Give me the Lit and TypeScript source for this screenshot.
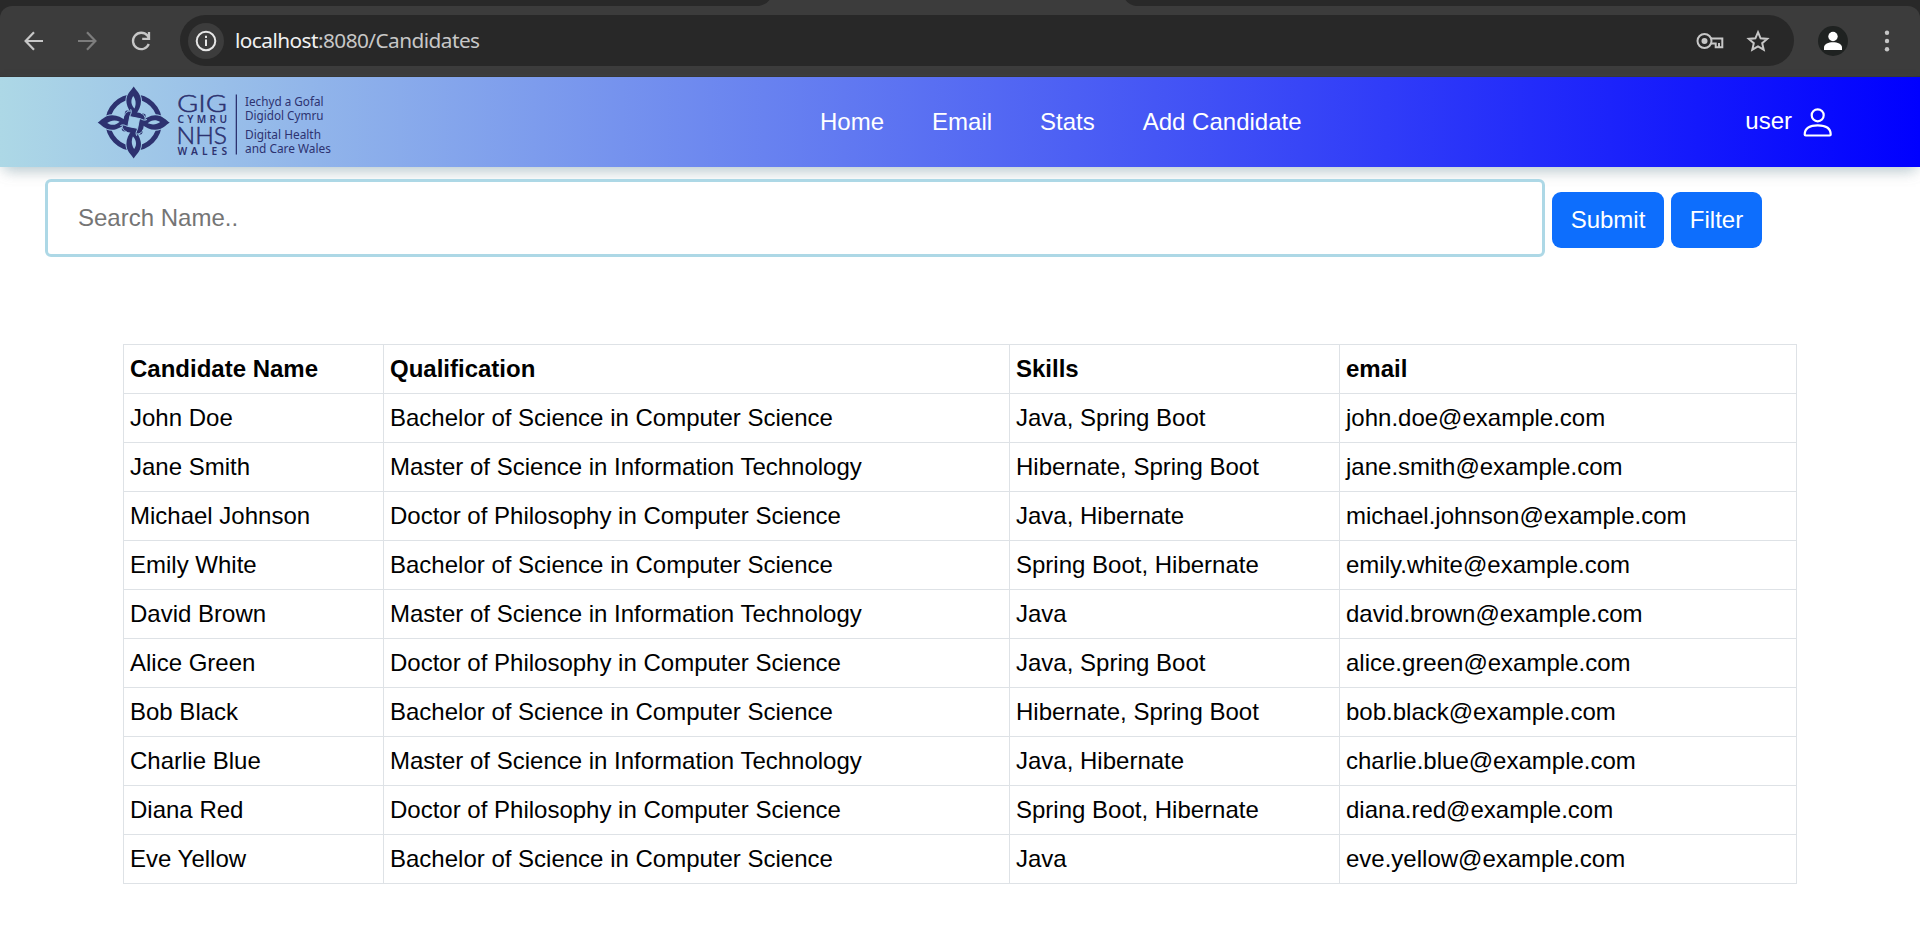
import { LitElement, html, css, svg } from "lit";
import { customElement, state } from "lit/decorators.js";

interface Candidate {
  name: string;
  qualification: string;
  skills: string;
  email: string;
}

const BSC = "Bachelor of Science in Computer Science";
const MSC = "Master of Science in Information Technology";
const PHD = "Doctor of Philosophy in Computer Science";

const CANDIDATES: Candidate[] = [
  { name: "John Doe", qualification: BSC, skills: "Java, Spring Boot", email: "john.doe@example.com" },
  { name: "Jane Smith", qualification: MSC, skills: "Hibernate, Spring Boot", email: "jane.smith@example.com" },
  { name: "Michael Johnson", qualification: PHD, skills: "Java, Hibernate", email: "michael.johnson@example.com" },
  { name: "Emily White", qualification: BSC, skills: "Spring Boot, Hibernate", email: "emily.white@example.com" },
  { name: "David Brown", qualification: MSC, skills: "Java", email: "david.brown@example.com" },
  { name: "Alice Green", qualification: PHD, skills: "Java, Spring Boot", email: "alice.green@example.com" },
  { name: "Bob Black", qualification: BSC, skills: "Hibernate, Spring Boot", email: "bob.black@example.com" },
  { name: "Charlie Blue", qualification: MSC, skills: "Java, Hibernate", email: "charlie.blue@example.com" },
  { name: "Diana Red", qualification: PHD, skills: "Spring Boot, Hibernate", email: "diana.red@example.com" },
  { name: "Eve Yellow", qualification: BSC, skills: "Java", email: "eve.yellow@example.com" },
];

@customElement("browser-bar")
export class BrowserBar extends LitElement {
  static styles = css`
    :host { display: block; height: 77px; background: #292929; font-family: "Noto Sans", sans-serif; overflow: hidden; }
    .tabs { height: 6px; display: flex; padding-left: 747px; }
    .toolbar {
      height: 71px; box-sizing: border-box; background: #3c3c3c; border-bottom: 1px solid #363636;
      border-radius: 12px 12px 0 0; display: flex; align-items: flex-start; padding: 9px 0 0 19.5px;
    }
    .btn { width: 28px; height: 52px; display: flex; align-items: center; justify-content: center; margin-right: 25.5px; flex: none; }
    .reload { margin-right: 25.5px; }
    .omnibox {
      width: 1614px; height: 51px; border-radius: 26px; background: #282828; box-sizing: border-box;
      display: flex; align-items: center; padding: 0 24px 0 8px; flex: none;
    }
    .info { width: 36px; height: 36px; border-radius: 50%; background: #3c3c3c; display: flex; align-items: center; justify-content: center; flex: none; }
    .url { margin: -2px 0 0 11px; font-size: 20.8px; letter-spacing: -0.55px; color: #c7c7c7; flex: 1; white-space: nowrap; line-height: 28px; }
    .host { color: #f1f1f1; }
    .key { margin-right: 20px; }
    .avatar { margin: 11px 0 0 24px; width: 30px; height: 30px; flex: none; }
    .menu { margin: 13px 0 0 36px; width: 6px; height: 26px; flex: none; }
    svg { display: block; }
  `;

  render() {
    return html`
      <div class="tabs">
        <svg width="402" height="6"><path d="M0 6H12Q19 5 22.500 0H378.500Q382 5 389 6H402Z" fill="#3c3c3c" /></svg>
      </div>
      <div class="toolbar">
        <div class="btn">
          <svg width="22" height="22" viewBox="0 0 22 22" fill="none" stroke="#c7c7c7" stroke-width="2.2"><path d="M20 11H3M11 2.200L2.600 11L11 19.800" /></svg>
        </div>
        <div class="btn">
          <svg width="22" height="22" viewBox="0 0 22 22" fill="none" stroke="#7d7d7d" stroke-width="2.2"><path d="M2 11H19M11 2.200L19.400 11L11 19.800" /></svg>
        </div>
        <div class="btn reload">
          <svg width="22" height="22" viewBox="0 0 22 22" fill="none" stroke="#c7c7c7" stroke-width="2.3"><path d="M18.800 14A8.200 8.200 0 1 1 17.400 5.600L19 8M19 2V8.800H12.200" /></svg>
        </div>
        <div class="omnibox">
          <div class="info">
            <svg width="22" height="22" viewBox="0 0 22 22"><circle cx="11" cy="11" r="9.300" fill="none" stroke="#e6e6e6" stroke-width="2" /><path d="M11 9.500V16M11 5.800V7.900" stroke="#e6e6e6" stroke-width="2" /></svg>
          </div>
          <div class="url"><span class="host">localhost</span>:8080/Candidates</div>
          <svg class="key" width="30" height="20" viewBox="0 0 30 20" fill="none" stroke="#c7c7c7" stroke-width="2">
            <circle cx="8.500" cy="10" r="7" /><circle cx="8.500" cy="10" r="3" fill="#c7c7c7" stroke="none" />
            <path d="M15 7.600H26.300V16.200H19.700V12.400H15M23 12V16" />
          </svg>
          <svg width="24" height="24" viewBox="0 0 24 24" fill="none" stroke="#c7c7c7" stroke-width="2"><path d="M12 3.200L14.600 9.300L21.200 9.900L16.200 14.200L17.700 20.700L12 17.300L6.300 20.700L7.800 14.200L2.800 9.900L9.400 9.300Z" /></svg>
        </div>
        <svg class="avatar" viewBox="0 0 30 30"><circle cx="15" cy="15" r="15" fill="#1f2221" /><circle cx="15" cy="10.500" r="4.700" fill="#fff" /><path d="M6 24V21.500C6 18 10.500 16.300 15 16.300S24 18 24 21.500V24Z" fill="#fff" /></svg>
        <svg class="menu" viewBox="0 0 6 26" fill="#c7c7c7"><circle cx="3" cy="4.700" r="2.200" /><circle cx="3" cy="13" r="2.200" /><circle cx="3" cy="21.300" r="2.200" /></svg>
      </div>
    `;
  }
}

@customElement("wales-logo")
export class WalesLogo extends LitElement {
  static styles = css`
    :host { display: block; width: 240px; height: 74px; }
    svg { display: block; overflow: visible; }
    .gig { font: 300 24px Lato, sans-serif; stroke: #2d3270; stroke-width: 0.5px; }
    .sub { font: 600 10.200px "Noto Sans", sans-serif; }
    .org { font: 400 13px "Noto Sans", sans-serif; }
  `;

  private turns(draw: () => unknown) {
    return [0, 90, 180, 270].map((a) => svg`<g transform=${`rotate(${a})`}>${draw()}</g>`);
  }

  render() {
    const leaf = "M0 -36C2 -32.500 7.300 -29 7.300 -21.500C7.300 -16 5 -12 2 -8L-3 -8C-3.500 -12 -7.300 -16 -7.300 -21.500C-7.300 -29 -2 -32.500 0 -36Z";
    const eye = "M-0.500 -26.500C2 -23 2.800 -19 0.800 -14C-2.600 -17.500 -3.500 -22 -0.500 -26.500Z";
    return html`
      <svg width="240" height="74" viewBox="0 0 240 74" fill="#2d3270">
        <g transform="translate(35.700 36.500)">
          <circle r="25.800" fill="none" stroke="#2d3270" stroke-width="4.900" />
          ${this.turns(() => svg`<path d=${leaf} stroke="#a0cbe7" stroke-width="2" />`)}
          ${this.turns(() => svg`<path d=${leaf} /><path d=${eye} fill="#a0cbe7" />`)}
          <g transform="rotate(11)">
            <rect x="-10.500" y="-10.500" width="21" height="21" rx="2" />
            <rect x="-5" y="-5" width="10" height="10" rx="1" fill="#a0cbe7" />
            ${this.turns(() => svg`<path d="M-5 -5H5.500C8 -4.500 10 -3.500 12.500 -5.500M-10.500 -5Q-10 -10 -5 -10.700" fill="none" stroke="#a0cbe7" stroke-width="0.900" />`)}
          </g>
        </g>
        <text class="gig" x="79" y="25.600" textLength="50" lengthAdjust="spacingAndGlyphs">GIG</text>
        <text class="sub" x="79.500" y="36.500" textLength="49.500">CYMRU</text>
        <text class="gig" x="78.500" y="58" textLength="50.500" lengthAdjust="spacingAndGlyphs">NHS</text>
        <text class="sub" x="79.500" y="68.500" textLength="49.500">WALES</text>
        <rect x="137.700" y="8.500" width="1.300" height="60" />
        <text class="org" x="147" y="20.200" textLength="78.500" lengthAdjust="spacingAndGlyphs">Iechyd a Gofal</text>
        <text class="org" x="147" y="34" textLength="78.500" lengthAdjust="spacingAndGlyphs">Digidol Cymru</text>
        <text class="org" x="147" y="52.700" textLength="76" lengthAdjust="spacingAndGlyphs">Digital Health</text>
        <text class="org" x="147" y="66.500" textLength="86" lengthAdjust="spacingAndGlyphs">and Care Wales</text>
      </svg>
    `;
  }
}

@customElement("app-root")
export class AppRoot extends LitElement {
  static styles = css`
    :host {
      display: block; height: 947px; background: #fff; color: #000; overflow: hidden;
      font: 24px/36px "Liberation Sans", Arial, sans-serif;
    }
    .nav {
      height: 90px; box-sizing: border-box; background: linear-gradient(to right, lightblue, blue);
      display: flex; align-items: flex-start; padding-left: 98px; color: #fff;
      box-shadow: 0 6px 12px -4px rgba(173, 216, 230, 0.5), 0 7px 15px -5px rgba(0, 0, 0, 0.25);
    }
    .logo { margin-top: 9px; }
    .links { display: flex; gap: 48px; margin: 27px 0 0 482px; }
    .link { color: #fff; text-decoration: none; white-space: nowrap; }
    .user { display: flex; align-items: flex-start; margin: 26px 87px 0 auto; }
    .person { display: block; margin: 5px 0 0 11px; }
    .search { display: flex; align-items: center; padding: 12px 0 0 45px; }
    .field {
      width: 1500px; height: 78px; box-sizing: border-box; border: 3px solid lightblue; border-radius: 6px;
      font: inherit; padding: 0 30px 1px; margin: 0; background: #fff; outline: none;
    }
    .field::placeholder { color: #757575; opacity: 1; }
    .button {
      height: 56px; box-sizing: border-box; border: 0; border-radius: 9px; background: #0d6efd; color: #fff;
      font: inherit; padding: 0; margin: 4px 0 0 7px; width: 112px;
    }
    .filter { width: 91px; }
    .table { width: 1674px; margin: 87px 0 0 123px; border-collapse: collapse; table-layout: fixed; }
    .cell { border: 1px solid #dee2e6; padding: 6px; height: 36px; text-align: left; white-space: nowrap; font-weight: 400; }
    .head { font-weight: 700; }
    .c1 { width: 260px; }
    .c2 { width: 626px; }
    .c3 { width: 330px; }
  `;

  @state() private candidates = CANDIDATES;

  render() {
    return html`
      <browser-bar></browser-bar>
      <nav class="nav">
        <wales-logo class="logo"></wales-logo>
        <div class="links">
          ${["Home", "Email", "Stats", "Add Candidate"].map((t) => html`<a class="link">${t}</a>`)}
        </div>
        <div class="user">
          <span>user</span>
          <svg class="person" width="30" height="30" viewBox="0 0 30 30" fill="none" stroke="#fff" stroke-width="2.2">
            <circle cx="14.700" cy="7.300" r="6" />
            <path d="M1.700 26.500C1.700 20 7.200 17.300 14.700 17.300S27.700 20 27.700 26.500Q27.700 27.500 26.700 27.500H2.700Q1.700 27.500 1.700 26.500Z" />
          </svg>
        </div>
      </nav>
      <div class="search">
        <input class="field" placeholder="Search Name.." />
        <button class="button">Submit</button>
        <button class="button filter">Filter</button>
      </div>
      <table class="table">
        <colgroup><col class="c1" /><col class="c2" /><col class="c3" /><col /></colgroup>
        <thead>
          <tr>${["Candidate Name", "Qualification", "Skills", "email"].map((t) => html`<th class="cell head">${t}</th>`)}</tr>
        </thead>
        <tbody>
          ${this.candidates.map((c) => html`<tr>
            <td class="cell">${c.name}</td><td class="cell">${c.qualification}</td>
            <td class="cell">${c.skills}</td><td class="cell">${c.email}</td>
          </tr>`)}
        </tbody>
      </table>
    `;
  }
}
